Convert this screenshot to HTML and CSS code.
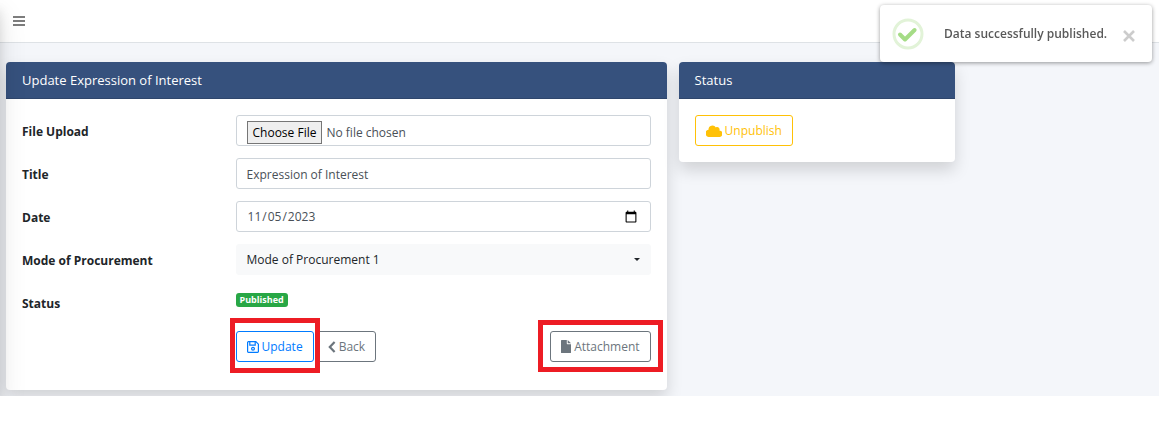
FILE: index.html
```html
<!DOCTYPE html>
<html lang="en-US">

<head>
    <meta charset="UTF-8">
    <meta name="viewport" content="width=device-width, initial-scale=1.0">
    <title>Update Expression of Interest</title>
    <link rel="stylesheet" href="styles.css">
</head>

<body>
    <div class="wrapper">
        <aside class="sidebar"></aside>

        <nav class="navbar">
            <button type="button" class="menu-toggle" aria-label="Toggle menu">
                <svg width="12" height="12" viewBox="0 0 12 12">
                    <path d="M0 2h12M0 6h12M0 10h12" stroke="#7d7d7d" stroke-width="1.8" />
                </svg>
            </button>
        </nav>

        <main class="content">
            <div class="col-main">
                <section class="card">
                    <h1 class="card-header">Update Expression of Interest</h1>
                    <form class="card-body">
                        <div class="form-row">
                            <label for="file">File Upload</label>
                            <input type="file" id="file" class="form-control form-file">
                        </div>
                        <div class="form-row">
                            <label for="title">Title</label>
                            <input type="text" id="title" class="form-control" value="Expression of Interest">
                        </div>
                        <div class="form-row">
                            <label for="date">Date</label>
                            <input type="date" id="date" class="form-control form-date" value="2023-11-05">
                        </div>
                        <div class="form-row">
                            <label for="mode">Mode of Procurement</label>
                            <div class="select-wrap">
                                <select id="mode" class="form-control form-select">
                                    <option>Mode of Procurement 1</option>
                                </select>
                            </div>
                        </div>
                        <div class="form-row form-row-status">
                            <span class="label">Status</span>
                            <div class="status"><span class="badge">Published</span></div>
                        </div>
                        <div class="form-row">
                            <div class="actions">
                                <span class="highlight highlight-update">
                                    <button type="submit" class="btn btn-primary">
                                        <svg width="12" height="12" viewBox="0 0 12 12" fill="none" stroke="currentColor" stroke-width="1.2">
                                            <path d="M.6 1.4a.8.8 0 0 1 .8-.8h7.4l2.6 2.6v7.4a.8.8 0 0 1-.8.8H1.4a.8.8 0 0 1-.8-.8z" />
                                            <path d="M2.8.8v3.4h5.4V.8" />
                                            <circle cx="6" cy="7.7" r="1.4" />
                                        </svg>
                                        Update
                                    </button>
                                </span>
                                <a href="#" class="btn btn-secondary">
                                    <svg width="8" height="12" viewBox="0 0 8 12" fill="none" stroke="currentColor" stroke-width="2.2">
                                        <path d="M6.6 1 1.8 6l4.8 5" />
                                    </svg>
                                    Back
                                </a>
                                <span class="highlight highlight-attachment">
                                    <a href="#" class="btn btn-secondary">
                                        <svg width="10" height="13" viewBox="0 0 10 13" fill="currentColor">
                                            <path d="M.6 0H5.8v3.6c0 .4.2.6.6.6H10v8.2c0 .3-.3.6-.6.6H.6c-.3 0-.6-.3-.6-.6V.6C0 .3.3 0 .6 0z" />
                                            <path d="M6.7 0 10 3.3H6.7z" />
                                        </svg>
                                        Attachment
                                    </a>
                                </span>
                            </div>
                        </div>
                    </form>
                </section>
            </div>

            <div class="col-side">
                <section class="card">
                    <h2 class="card-header">Status</h2>
                    <div class="card-body">
                        <button type="button" class="btn btn-warning">
                            <svg width="16" height="12" viewBox="0 0 16 12" fill="currentColor">
                                <path d="M13.4 5.4c.1-.3.2-.6.2-.9 0-1.3-1.1-2.4-2.4-2.4-.5 0-1 .1-1.3.4A4 4 0 0 0 2.5 4.7 3.7 3.7 0 0 0 3.6 12h9.2a3.2 3.2 0 0 0 .6-6.6z" />
                            </svg>
                            Unpublish
                        </button>
                    </div>
                </section>
            </div>
        </main>
    </div>

    <div class="toast" role="status">
        <svg class="toast-icon" width="32" height="32" viewBox="0 0 32 32" fill="none">
            <circle cx="16" cy="16" r="14" stroke="#e2f3d8" stroke-width="3" />
            <path d="m8 16.5 5 5L22.6 12" stroke="#a5dc86" stroke-width="4" stroke-linecap="round" stroke-linejoin="round" />
        </svg>
        <p class="toast-title">Data successfully published.</p>
        <button type="button" class="toast-close" aria-label="Close">
            <svg width="12" height="12" viewBox="0 0 12 12">
                <path d="m1 1 10 10M11 1 1 11" stroke="#ccc" stroke-width="2.6" />
            </svg>
        </button>
    </div>
</body>

</html>
```
FILE: styles.css
```css
* {
    margin: 0;
    padding: 0;
    box-sizing: border-box;
}

body {
    background: #fff;
    color: #212529;
    font-family: "Open Sans", "Noto Sans", sans-serif;
    font-size: 12px;
    line-height: 18px;
}

.wrapper {
    position: relative;
    overflow: hidden;
    background: #f4f6fa;
}

/* collapsed sidebar, only its shadow reaches the page */
.sidebar {
    position: absolute;
    z-index: 2;
    top: 0;
    bottom: 0;
    left: -80px;
    width: 80px;
    box-shadow: 0 14px 28px rgba(0, 0, 0, 0.12), 0 10px 10px rgba(0, 0, 0, 0.1);
}

.navbar {
    display: flex;
    align-items: center;
    height: 43px;
    padding: 0 13px;
    background: #fff;
    border-bottom: 1px solid #dee2e6;
}

.menu-toggle {
    display: flex;
    border: 0;
    background: none;
    cursor: pointer;
}

.content {
    display: flex;
    align-items: flex-start;
    padding: 19px 0 6px 6px;
}

.col-main {
    width: calc(100% * 7 / 12);
    padding-right: 12px;
}

.col-side {
    width: 25%;
    padding-right: 12px;
}

.card {
    background: #fff;
    border-radius: 4px;
    box-shadow: 0 8px 16px rgba(0, 0, 0, 0.15);
}

.card-header {
    padding: 8px 16px;
    background: #36517d;
    border-bottom: 1px solid #2f466c;
    border-radius: 4px 4px 0 0;
    color: #fff;
    font-size: 13px;
    font-weight: 400;
    line-height: 20px;
}

.card-body {
    padding: 16px;
}

.form-row {
    display: grid;
    grid-template-columns: 1fr 2fr;
    column-gap: 6px;
    align-items: center;
    min-height: 31px;
    margin-bottom: 12px;
}

.form-row label,
.form-row .label {
    padding-top: 2px;
    font-weight: 700;
}

.form-row-status {
    min-height: 32px;
}

.form-control {
    width: 100%;
    height: 31px;
    padding: 5px 10px 4px;
    background: #fff;
    border: 1px solid #ced4da;
    border-radius: 3px;
    color: #495057;
    font: inherit;
}

.form-file {
    overflow: hidden;
    padding: 5px 10px 0;
}

.form-file::file-selector-button {
    height: 23px;
    padding: 0 5px;
    background: #efefef;
    border: 1px solid #767676;
    border-radius: 0;
    color: #000;
    font: inherit;
}

.form-date::-webkit-calendar-picker-indicator {
    width: 14px;
    height: 14px;
}

.select-wrap {
    position: relative;
}

.select-wrap::after {
    content: "";
    position: absolute;
    top: 14px;
    right: 11px;
    border: 3px solid transparent;
    border-top-color: #212529;
    border-bottom: 0;
    pointer-events: none;
}

.form-select {
    appearance: none;
    background: #f8f9fa;
    border-color: #f8f9fa;
    color: #212529;
}

.status {
    display: flex;
    padding-bottom: 6px;
}

.badge {
    padding: 0 4px;
    background: #28a745;
    border-radius: 3px;
    color: #fff;
    font-size: 9px;
    font-weight: 700;
    line-height: 14px;
}

.actions {
    display: flex;
    grid-column: 2;
    gap: 3px;
}

.btn {
    display: inline-flex;
    align-items: center;
    gap: 3px;
    height: 31px;
    padding: 0 10px;
    background: #fff;
    border: 1px solid;
    border-radius: 3px;
    font: inherit;
    text-decoration: none;
    cursor: pointer;
}

.btn-primary {
    color: #007bff;
}

.btn-secondary {
    color: #6c757d;
}

.btn-warning {
    color: #ffc107;
}

.highlight {
    position: relative;
    display: flex;
}

.highlight::after {
    content: "";
    position: absolute;
    z-index: 1;
    border: 5px solid #ed1c24;
    pointer-events: none;
}

.highlight-update::after {
    inset: -13px -6px -11px;
}

.highlight-attachment {
    margin-left: auto;
}

.highlight-attachment::after {
    inset: -11px -12px -10px;
}

.toast {
    position: fixed;
    z-index: 3;
    top: 5px;
    right: 7px;
    display: flex;
    align-items: center;
    width: 272px;
    height: 57px;
    padding: 0 17px 0 12px;
    background: #fff;
    border-radius: 4px;
    box-shadow: 0 1px 4px rgba(0, 0, 0, 0.4);
}

.toast-icon {
    flex: none;
}

.toast-title {
    flex: 1;
    padding-left: 20px;
    color: #595959;
    font-weight: 600;
    white-space: nowrap;
}

.toast-close {
    display: flex;
    padding-top: 4px;
    border: 0;
    background: none;
    cursor: pointer;
}
```
